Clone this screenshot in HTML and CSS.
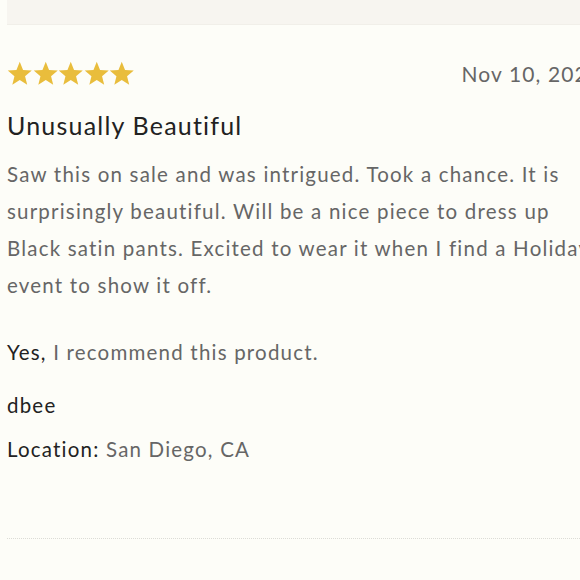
FILE: index.html
```html
<!DOCTYPE html>
<html>
<head>
<meta charset="utf-8">
<link rel="stylesheet" href="styles.css">
</head>
<body>
<div class="page">
  <div class="topbox"></div>
  <div class="review">
    <div class="head">
      <div class="stars">
        <svg viewBox="0 0 24 24" class="star"><path d="M12 1.5l3.1 7.6 8.2.6-6.3 5.3 2 8-7-4.4-7 4.4 2-8L.7 9.7l8.2-.6z"/></svg>
        <svg viewBox="0 0 24 24" class="star"><path d="M12 1.5l3.1 7.6 8.2.6-6.3 5.3 2 8-7-4.4-7 4.4 2-8L.7 9.7l8.2-.6z"/></svg>
        <svg viewBox="0 0 24 24" class="star"><path d="M12 1.5l3.1 7.6 8.2.6-6.3 5.3 2 8-7-4.4-7 4.4 2-8L.7 9.7l8.2-.6z"/></svg>
        <svg viewBox="0 0 24 24" class="star"><path d="M12 1.5l3.1 7.6 8.2.6-6.3 5.3 2 8-7-4.4-7 4.4 2-8L.7 9.7l8.2-.6z"/></svg>
        <svg viewBox="0 0 24 24" class="star"><path d="M12 1.5l3.1 7.6 8.2.6-6.3 5.3 2 8-7-4.4-7 4.4 2-8L.7 9.7l8.2-.6z"/></svg>
      </div>
      <div class="date">Nov 10, 2022</div>
    </div>
    <h2 class="title">Unusually Beautiful</h2>
    <p class="body">Saw this on sale and was intrigued. Took a chance. It is<br>surprisingly beautiful. Will be a nice piece to dress up<br>Black satin pants. Excited to wear it when I find a Holiday<br>event to show it off.</p>
    <p class="rec"><span class="strong">Yes,</span> I recommend this product.</p>
    <p class="author">dbee</p>
    <p class="loc"><span class="strong">Location:</span> San Diego, CA</p>
  </div>
  <div class="divider"></div>
</div>
</body>
</html>
```
FILE: styles.css
```css
html, body {
  margin: 0;
  padding: 0;
  background: #fdfdf8;
  overflow: hidden;
}
.page {
  width: 580px;
  height: 580px;
  padding-left: 7px;
  box-sizing: border-box;
  font-family: Lato, "Open Sans", sans-serif;
  overflow: hidden;
}
.topbox {
  height: 24px;
  background: #f7f5f0;
  border-bottom: 1px solid #f1efe9;
}
.review {
  padding-top: 34px;
}
.head {
  display: flex;
  justify-content: space-between;
  align-items: center;
  width: 594px;
  height: 28px;
}
.stars {
  display: flex;
}
.star {
  width: 25.5px;
  height: 26px;
  fill: #e9bd3c;
}
.date {
  font-size: 21px;
  color: #666;
  letter-spacing: 1.1px;
  white-space: nowrap;
}
.title {
  margin: 22px 0 0;
  font-size: 25px;
  font-weight: 400;
  color: #222;
  letter-spacing: 1.2px;
  line-height: 32px;
}
.body {
  margin: 15px 0 0;
  white-space: nowrap;
  font-size: 20.5px;
  line-height: 37px;
  color: #666;
  letter-spacing: 1.2px;
}
.rec {
  margin: 33px 0 0;
  font-size: 20.5px;
  line-height: 30px;
  color: #666;
  letter-spacing: 1.2px;
}
.strong {
  color: #222;
}
.author {
  margin: 23px 0 0;
  font-size: 20.5px;
  line-height: 30px;
  color: #222;
  letter-spacing: 1.2px;
}
.loc {
  margin: 14px 0 0;
  font-size: 20.5px;
  line-height: 30px;
  color: #666;
  letter-spacing: 1.2px;
}
.divider {
  margin-top: 74px;
  border-top: 1px dotted #dcdcd6;
}
```
